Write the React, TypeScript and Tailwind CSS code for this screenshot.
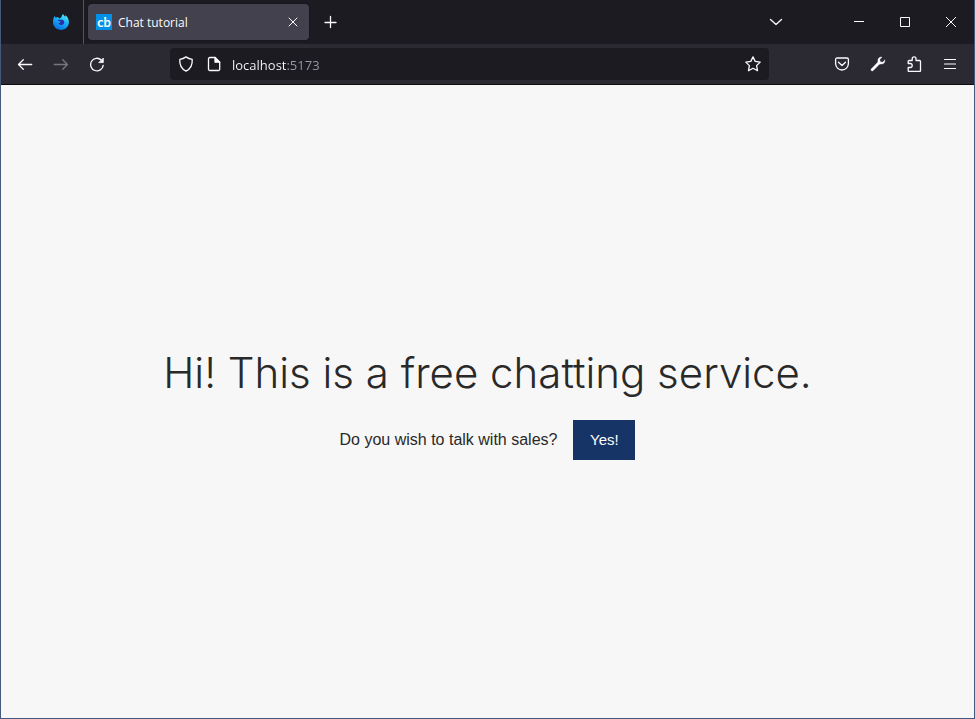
import type { ReactNode } from "react";

type IconButtonProps = {
  label: string;
  className: string;
  disabled?: boolean;
  children: ReactNode;
};

function IconButton({ label, className, disabled, children }: IconButtonProps) {
  return (
    <button
      type="button"
      aria-label={label}
      disabled={disabled}
      className={`flex shrink-0 items-center justify-center ${className}`}
    >
      {children}
    </button>
  );
}

function Icon({ children, width = 1.3 }: { children: ReactNode; width?: number }) {
  return (
    <svg
      viewBox="0 0 16 16"
      className="h-4 w-4 shrink-0"
      fill="none"
      stroke="currentColor"
      strokeWidth={width}
      strokeLinecap="round"
      strokeLinejoin="round"
      aria-hidden="true"
    >
      {children}
    </svg>
  );
}

function BrowserLogo() {
  return (
    <svg viewBox="0 0 16 16" className="h-4 w-4" aria-hidden="true">
      <defs>
        <linearGradient id="flame" x1="0.8" y1="0" x2="0.3" y2="1">
          <stop offset="0" stopColor="#5ff0fb" />
          <stop offset="0.45" stopColor="#16b2f8" />
          <stop offset="1" stopColor="#0a6be0" />
        </linearGradient>
      </defs>
      <path
        d="M1.6 2C1.9 2.800 2.300 3.400 2.800 3.700C3.400 3.200 4.200 3 5 3C5.300 3.700 5.900 4.200 6.600 4.400C7.600 4 8.400 3.300 8.700 2.200C8.900 1.300 9.400.5 10.200 0C10.500 1.300 11.300 2 12.200 2.700C12.400 2.100 12.400 1.600 12.300 1C14.700 2.600 16 5.600 15.900 8.600C15.700 12.700 12.300 16 8.100 16C3.600 16 0 12.700 0 8.300C0 5.800.5 3.600 1.600 2Z"
        fill="url(#flame)"
      />
      <path
        d="M4.500 5.900C5.400 5.500 6.300 5.600 7 6.100C8.200 5.500 9.700 5.700 10.600 6.600C11.500 7.600 11.400 9.200 10.400 10.200C9.100 11.300 7.100 11.100 6 10C5.500 9.500 5.300 9.100 5.200 8.700C6 9.200 7 9.100 7.600 8.600C6.500 8.500 6.900 7.700 7.800 7.300C6.600 7 5.300 7.100 4.500 5.900Z"
        fill="#2b2fa5"
      />
    </svg>
  );
}

function TabStrip() {
  return (
    <header className="flex h-11 items-center bg-[#1c1b22] text-[#fbfbfe]">
      <IconButton label="Pinned tab" className="ml-[42px] h-9 w-9">
        <BrowserLogo />
      </IconButton>
      <div className="ml-1 h-full w-px bg-[#55545c]" />
      <div className="ml-1 flex h-9 w-[221px] items-center rounded bg-[#42414d] pr-1 pl-2 shadow-[0_0_2px_rgba(0,0,0,0.5)]">
        <span
          aria-hidden="true"
          className="flex h-4 w-4 items-center justify-center bg-[#0290e8] pb-px font-['Lato',sans-serif] text-[13px] leading-4 font-bold text-white"
        >
          cb
        </span>
        <span className="ml-1.5 flex-1 pt-0.5 font-['Open_Sans',sans-serif] text-[12px] leading-4">
          Chat tutorial
        </span>
        <IconButton label="Close tab" className="h-6 w-6">
          <Icon width={1}>
            <path d="M4 4L12 12M12 4L4 12" />
          </Icon>
        </IconButton>
      </div>
      <IconButton label="New tab" className="ml-1 h-9 w-9">
        <Icon width={1.3}>
          <path d="M7.500 2.500V13.500M2 8.500H13" />
        </Icon>
      </IconButton>
      <IconButton label="List all tabs" className="mr-[42px] ml-auto h-9 w-9">
        <Icon>
          <path d="M2.500 5.500L8 10.500L13.500 5.500" />
        </Icon>
      </IconButton>
      <IconButton label="Minimize" className="h-full w-[46px]">
        <svg viewBox="0 0 10 10" className="h-2.5 w-2.5" fill="none" stroke="currentColor" aria-hidden="true">
          <path d="M0 4.500H10" />
        </svg>
      </IconButton>
      <IconButton label="Maximize" className="h-full w-[46px]">
        <svg viewBox="0 0 10 10" className="h-2.5 w-2.5" fill="none" stroke="currentColor" aria-hidden="true">
          <path d="M.5 .5H9.500V9.500H.5Z" />
        </svg>
      </IconButton>
      <IconButton label="Close window" className="h-full w-[46px]">
        <svg viewBox="0 0 10 10" className="h-2.5 w-2.5" fill="none" stroke="currentColor" aria-hidden="true">
          <path d="M0 0L10 10M10 0L0 10" />
        </svg>
      </IconButton>
    </header>
  );
}

function Toolbar() {
  return (
    <nav className="flex h-[41px] items-center border-b border-[#0c0c0d] bg-[#2b2a33] px-1.5 text-[#fbfbfe]">
      <IconButton label="Back" className="h-8 w-9">
        <Icon>
          <path d="M1.500 8.500H14.700M6.300 3.700L1.500 8.500L6.300 13.300" />
        </Icon>
      </IconButton>
      <IconButton label="Forward" disabled className="h-8 w-9 text-[#77767d]">
        <Icon>
          <path d="M1.300 8.500H14.500M9.700 3.700L14.500 8.500L9.700 13.300" />
        </Icon>
      </IconButton>
      <IconButton label="Reload" className="h-8 w-9">
        <Icon>
          <path d="M12.300 4A6.300 6.300 0 1 0 14.200 9.300" />
          <path d="M14.300 2.400V6.600H10.100Z" fill="currentColor" strokeWidth={0.8} />
        </Icon>
      </IconButton>

      <form className="mx-[55px] flex h-8 flex-1 items-center rounded bg-[#1c1b22] px-2">
        <Icon>
          <path d="M8 .9C10 2.300 12 3 14.200 3.300C14.600 8.500 12.500 13 8 15.200C3.500 13 1.400 8.500 1.800 3.300C4 3 6 2.300 8 .9Z" />
        </Icon>
        <span className="ml-3 flex">
          <Icon>
            <path d="M3.800 1.500H9L13.700 6.200V13.200A1.300 1.300 0 0 1 12.400 14.500H3.800A1.300 1.300 0 0 1 2.500 13.200V2.800A1.300 1.300 0 0 1 3.800 1.500Z" />
            <path d="M9 1.500V6.200H13.700Z" fill="currentColor" />
          </Icon>
        </span>
        <input
          type="text"
          aria-label="Address"
          defaultValue="localhost:5173"
          className="ml-2.5 h-6 min-w-0 flex-1 bg-[linear-gradient(90deg,#fbfbfe_54px,#9b9aa2_54px)] bg-clip-text pt-0.5 font-['Open_Sans',sans-serif] text-[13px] text-transparent outline-none"
        />
        <IconButton label="Bookmark this page" className="h-6 w-4">
          <Icon>
            <path d="M8 .9L10.200 5.400L15.200 6.100L11.600 9.600L12.500 14.700L8 12.300L3.500 14.700L4.400 9.600L.8 6.100L5.800 5.400Z" />
          </Icon>
        </IconButton>
      </form>

      <IconButton label="Save to Pocket" className="h-8 w-9">
        <Icon>
          <path d="M3 2H13A1.400 1.400 0 0 1 14.400 3.400V7.600A6.400 6.400 0 0 1 1.600 7.600V3.400A1.400 1.400 0 0 1 3 2Z" />
          <path d="M4.500 6.200L8 9.500L11.500 6.200" />
        </Icon>
      </IconButton>
      <IconButton label="Developer tools" className="h-8 w-9">
        <Icon width={0.4}>
          <path
            d="M14.800 4.200L12.500 6.200L10.200 5.700L9.800 3.400L12 1.100C9.700.6 7.500 2.500 7.900 5C8 5.600 7.900 6.200 7.500 6.600L1.200 13C.3 14.200 1.800 15.600 3 14.700L9.200 8.500C9.700 8 10.300 7.900 11 8C13.400 8.300 15.300 6.500 14.800 4.200Z"
            fill="currentColor"
          />
        </Icon>
      </IconButton>
      <IconButton label="Extensions" className="h-8 w-9">
        <Icon>
          <path d="M2.200 7.500V5.500A1 1 0 0 1 3.200 4.500H6.200V2.800A1.900 1.900 0 0 1 10 2.800V4.500H13.500A1 1 0 0 1 14.500 5.500V14.500A1 1 0 0 1 13.500 15.500H3.200A1 1 0 0 1 2.200 14.500V11.500H4.200A2 2 0 0 0 4.200 7.500H2.200Z" />
        </Icon>
      </IconButton>
      <IconButton label="Open application menu" className="h-8 w-9">
        <Icon width={1.2}>
          <path d="M2.500 3.500H13.500M2.500 8H13.500M2.500 12.500H13.500" />
        </Icon>
      </IconButton>
    </nav>
  );
}

export default function App() {
  return (
    <div className="flex min-h-screen flex-col border-x border-b border-[#445a7c] bg-[#f7f7f7]">
      <TabStrip />
      <Toolbar />
      <main className="flex flex-1 flex-col items-center justify-center text-[#292929]">
        <h1 className="py-1 text-center font-['Inter',sans-serif] text-[42px] leading-[50px] font-light">
          Hi! This is a free chatting service.
        </h1>
        <div className="mt-[18px] flex items-center gap-4 font-['Liberation_Sans',Arial,sans-serif]">
          <p className="text-[16px] leading-6">Do you wish to talk with sales?</p>
          <button
            type="button"
            className="h-10 min-w-[62px] bg-[#163465] px-4 text-[15px] leading-6 text-white"
          >
            Yes!
          </button>
        </div>
      </main>
    </div>
  );
}
